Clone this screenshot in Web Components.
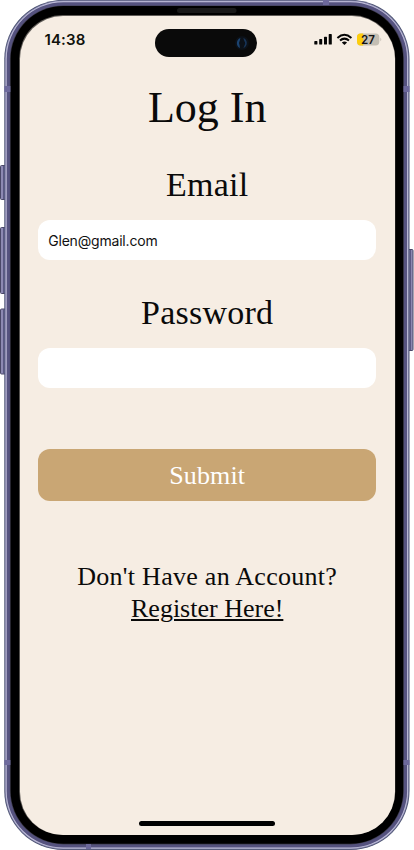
<!DOCTYPE html>
<html lang="en">
<head>
<meta charset="utf-8">
<title>Log In</title>
<style>
html,body{margin:0;background:#fff}
</style>
</head>
<body>
<phone-frame>
  <status-bar slot="status" time="14:38" battery="27"></status-bar>
  <login-screen></login-screen>
</phone-frame>
<script>
class Base extends HTMLElement {
  connectedCallback() {
    if (!this.shadowRoot) this.attachShadow({mode: 'open'}).innerHTML = this.view();
  }
}

customElements.define('phone-frame', class extends Base {
  view() {
    const ring = (i, c) => `<rect x="${4.3 + i}" y="${i - .2}" width="${405.2 - 2 * i}" height="${850.2 - 2 * i}" rx="${59 - i}" fill="${c}"/>`;
    const key = (x, y, h) => `<rect x="${x + .5}" y="${y + .5}" width="5" height="${h - 1}" rx="1" fill="#8c89b2" stroke="#4a4868"/><path d="M${x + 3.6} ${y + 1}v${h - 2}" stroke="#56537f" stroke-width="1"/>`;
    return `<style>
      :host{display:block;position:relative;width:414px;height:850px;overflow:hidden;background:#fff}
      .shell{position:absolute;inset:0;display:block}
      .screen{position:absolute;left:19.6px;top:15.6px;width:375.2px;height:819px;border-radius:43px;background:#f6ede3;overflow:hidden;box-sizing:border-box;display:flex;flex-direction:column}
      .body{flex:1}
      .home{width:135.5px;height:5.4px;border-radius:3px;background:#000;margin:0 auto 8.2px}
    </style>
    <svg class="shell" width="414" height="850" viewBox="0 0 414 850">
      ${key(0, 165, 35)}${key(0, 227, 67)}${key(0, 308.5, 66)}
      <rect x="406" y="249.5" width="7" height="101" rx="1" fill="#8c89b2" stroke="#4a4868"/>
      <path d="M410.3 250v100" stroke="#56537f" stroke-width="1.2"/>
      ${ring(0, '#48506f')}${ring(.8, '#8987ad')}${ring(1.5, '#c2c1dc')}${ring(2.4, '#55527f')}${ring(5.6, '#403f50')}${ring(6.3, '#000')}
      <g fill="#6d699c"><path d="M4.4 86h6v6h-6zM403.5 86h6v6h-6zM4.4 760h6v5h-6zM403.5 760h6v5h-6zM323 0h6v5h-6zM86 844h5v5h-5z"/></g>
      <rect x="177" y="8" width="59.5" height="5" rx="2.5" fill="#191919"/>
      <rect x="19.1" y="15.1" width="376.2" height="820" rx="43.5" fill="#5f5b57"/>
    </svg>
    <div class="screen"><slot name="status"></slot><div class="body"><slot></slot></div><div class="home"></div></div>`;
  }
});

customElements.define('status-bar', class extends Base {
  view() {
    return `<style>
      :host{display:grid;grid-template-columns:135.4px 102px 1fr;height:42px;padding-top:13px;box-sizing:border-box;font-family:Inter,"Liberation Sans",sans-serif;color:#10120c}
      .time{font-size:15px;font-weight:600;line-height:21px;padding-left:24.8px;letter-spacing:.15px}
      .island{height:28px;border-radius:14px;background:#0a0a0a;display:flex;justify-content:flex-end;align-items:center;padding-right:7px;box-sizing:border-box}
      .icons{display:flex;align-items:flex-start;padding:4px 0 0 55px}
      svg{display:block}
    </style>
    <div class="time">${this.getAttribute('time')}</div>
    <div class="island"><svg width="16" height="16" viewBox="0 0 16 16"><circle cx="8" cy="8" r="7" fill="#0c1118"/><path d="M6.4 3C1.8 4.8 1.8 11.2 6 13L5.5 9.8C4.9 8.5 5 7.5 5.7 6Z" fill="#1b4370"/><path d="M9.3 3C14 4.8 14 11.2 9.4 13L10.8 9.8C11.4 8.5 11.3 7.5 10.3 6Z" fill="#173457"/></svg></div>
    <div class="icons"><svg width="70" height="15" viewBox="0 0 70 15">
      <g fill="#050505"><rect x="2.3" y="8.1" width="3.1" height="3.5" rx=".7"/><rect x="7.2" y="6.1" width="3" height="5.5" rx=".7"/><rect x="12" y="3.7" width="3" height="7.9" rx=".7"/><rect x="16.7" y="1.1" width="3.1" height="10.5" rx=".7"/></g>
      <g fill="none" stroke="#050505" stroke-width="2"><path d="M25.4 4.9Q32.4-1.3 39.4 4.9"/><path d="M28 7.6Q32.4 3.7 37 7.6"/></g>
      <path d="M29.8 9.5Q32.4 7.4 35.1 9.5L32.4 12.1Z" fill="#050505"/>
      <clipPath id="b"><rect x="45" y=".4" width="22.3" height="12" rx="3.6"/></clipPath>
      <g clip-path="url(#b)"><rect x="45" y="0" width="23" height="14" fill="#c4beb3"/><rect x="45" y="0" width="6.2" height="14" fill="#fdcd0b"/></g>
      <path d="M68.4 4.5Q70.1 6.4 68.4 8.3Z" fill="#c4beb3"/>
      <text x="56" y="10.6" font-size="11.6" font-weight="600" text-anchor="middle" fill="#141414">${this.getAttribute('battery')}</text>
    </svg></div>`;
  }
});

customElements.define('text-field', class extends Base {
  view() {
    return `<style>
      :host{display:block}
      label{display:block;text-align:center;font-size:34px;line-height:40px;padding-top:1px;margin-bottom:15px;letter-spacing:var(--track,.2px)}
      .box{height:40.4px;border-radius:12px;background:#fff;display:flex;align-items:center;padding:1px 10px 0;box-sizing:border-box;font:14px/20px Inter,"Liberation Sans",sans-serif;letter-spacing:-.19px;color:#111}
    </style>
    <label>${this.getAttribute('label')}</label><div class="box"><slot></slot></div>`;
  }
});

customElements.define('submit-button', class extends Base {
  view() {
    return `<style>
      :host{display:flex;align-items:center;justify-content:center;height:52px;padding-top:2px;box-sizing:border-box;border-radius:12px;background:#c9a674;color:#fff;font-size:26px;line-height:32px;letter-spacing:.15px}
    </style><slot></slot>`;
  }
});

customElements.define('login-screen', class extends Base {
  view() {
    return `<style>
      :host{display:flex;flex-direction:column;padding:25.4px 18.6px 0;font-family:"Liberation Serif",serif;color:#0a0a0a}
      h1{font-size:44px;line-height:50px;font-weight:400;text-align:center;margin:0 0 31px}
      .pass{margin-top:31.6px;--track:.25px}
      submit-button{margin-top:60.5px}
      p{font-size:26px;line-height:32px;text-align:center;margin:60.4px 0 0}
      .q{display:block;letter-spacing:.28px}
      a{display:inline-block;color:inherit;text-decoration:underline;text-decoration-thickness:1.5px;text-underline-offset:2px}
    </style>
    <h1>Log In</h1>
    <text-field label="Email">Glen@gmail.com</text-field>
    <text-field class="pass" label="Password"></text-field>
    <submit-button>Submit</submit-button>
    <p><span class="q">Don't Have an Account?</span><a>Register Here!</a></p>`;
  }
});
</script>
</body>
</html>
